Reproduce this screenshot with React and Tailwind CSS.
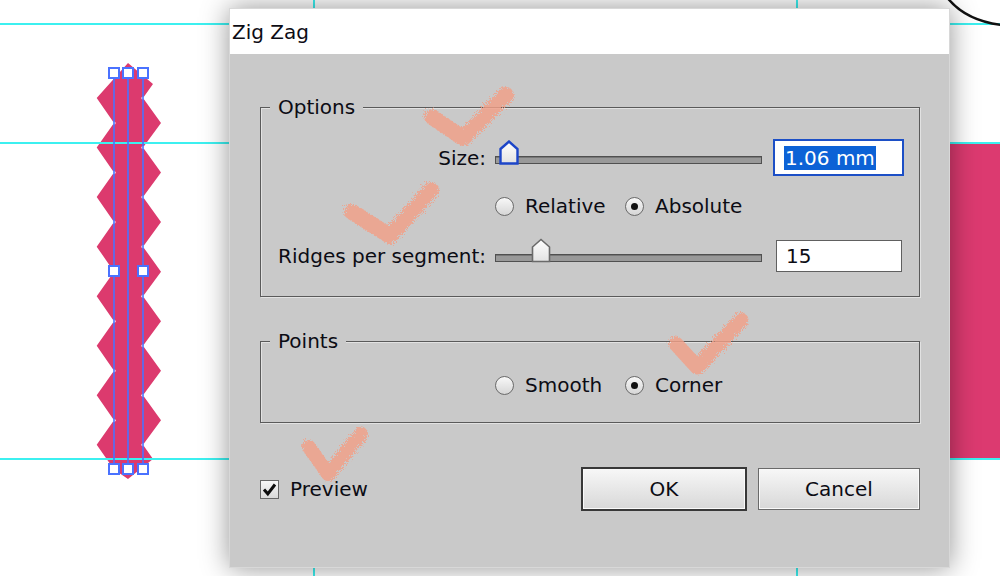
import React from 'react';

const P = 49.55;

// zig zag band, right edge top->bottom then left edge bottom->top
function zigzagPoints() {
  const pts = [[128, 63], [153, 84], [143, 98]];
  for (let k = 0; k < 7; k++) {
    pts.push([161, 123 + P * k]);
    pts.push([143, 98 + P * (k + 1)]);
  }
  pts.push([153, 459], [128, 479], [114, 469.5], [96.7, 98 + P * 7]);
  for (let k = 6; k >= 0; k--) {
    pts.push([114, 123 + P * k]);
    pts.push([96.7, 98 + P * k]);
  }
  return pts.map((p) => p.join(',')).join(' ');
}

function Canvas() {
  const handles = [
    [114, 73], [128, 73], [143, 73],
    [114, 271], [143, 271],
    [114, 469], [128, 469], [143, 469],
  ];
  return (
    <svg className="absolute inset-0" width="1000" height="576" viewBox="0 0 1000 576">
      <rect x="950" y="143" width="50" height="316" fill="#dc3a70" />
      <polygon points={zigzagPoints()} fill="#dc3a6e" />
      {[0, 1, 2, 3, 4, 5, 6, 7].map((k) => (
        <circle key={'a' + k} cx="143" cy={98 + P * k} r="1.6" fill="#fff" />
      ))}
      {[0, 1, 2, 3, 4, 5, 6].map((k) => (
        <circle key={'b' + k} cx="114" cy={123 + P * k} r="1.6" fill="#fff" />
      ))}
      {/* guides */}
      <g stroke="#3cf0f0" strokeWidth="2">
        <line x1="0" y1="24" x2="1000" y2="24" />
        <line x1="0" y1="143" x2="1000" y2="143" />
        <line x1="0" y1="459" x2="1000" y2="459" />
        <line x1="314" y1="0" x2="314" y2="576" />
        <line x1="797" y1="0" x2="797" y2="576" />
      </g>
      <path d="M946 -4 C958 12 976 22 1002 25" fill="none" stroke="#111" strokeWidth="2.5" />
      {/* selection */}
      <g stroke="#4a72ff" strokeWidth="1.6">
        <line x1="114" y1="73" x2="114" y2="469" />
        <line x1="128" y1="73" x2="128" y2="469" />
        <line x1="143" y1="73" x2="143" y2="469" />
      </g>
      {handles.map(([x, y], i) => (
        <rect key={i} x={x - 5} y={y - 5} width="10" height="10" fill="#fff" stroke="#4a72ff" strokeWidth="2" />
      ))}
    </svg>
  );
}

function Group({ title, className = '', children }) {
  return (
    <div className={`relative border border-[#5a5a5a] shadow-[inset_1px_1px_0_#e2e2e2,1px_1px_0_#e2e2e2] ${className}`}>
      <span className="absolute left-[9px] -top-[13px] bg-[#c9c9c9] px-[8px] leading-[24px]">{title}</span>
      {children}
    </div>
  );
}

function Thumb({ left, focused }) {
  const id = focused ? 'tf' : 'tn';
  return (
    <svg className="absolute top-[-7px]" style={{ left }} width="20" height="25" viewBox="0 0 20 25">
      <defs>
        <linearGradient id={id} x1="0" y1="0" x2="0" y2="1">
          <stop offset="0" stopColor="#ffffff" />
          <stop offset="1" stopColor="#e2e2e2" />
        </linearGradient>
      </defs>
      <polygon
        points="1.5,9 10,1.5 18.5,9 18.5,23.5 1.5,23.5"
        fill={`url(#${id})`}
        stroke={focused ? '#1c45c8' : '#6a6a6a'}
        strokeWidth={focused ? 2.4 : 1.6}
        strokeLinejoin="miter"
      />
    </svg>
  );
}

function Slider({ thumb, focused }) {
  return (
    <div className="relative w-[267px] h-[22px] flex items-center">
      <div className="w-full h-[8px] mt-[4px] border border-[#505050] bg-[#999] shadow-[inset_0_1px_0_#777]" />
      <Thumb left={thumb} focused={focused} />
    </div>
  );
}

function Radio({ checked, label, className = '' }) {
  return (
    <div className={`flex items-center ${className}`}>
      <span className="w-[19px] h-[19px] rounded-full border-[1.5px] border-[#6a6a6a] bg-linear-to-b from-[#f8f8f8] to-[#d6d6d6] flex items-center justify-center">
        {checked && <span className="w-[7px] h-[7px] rounded-full bg-[#111]" />}
      </span>
      <span className="ml-[11px]">{label}</span>
    </div>
  );
}

function Checks() {
  return (
    <svg className="absolute inset-0 pointer-events-none" width="1000" height="576" viewBox="0 0 1000 576">
      <defs>
        <filter id="brush" x="-20%" y="-20%" width="140%" height="140%">
          <feTurbulence type="fractalNoise" baseFrequency="1.1" numOctaves="2" result="n" />
          <feDisplacementMap in="SourceGraphic" in2="n" scale="9" result="d" />
          <feGaussianBlur in="d" stdDeviation="0.6" />
        </filter>
      </defs>
      <g fill="none" stroke="#f2a088" strokeLinecap="round" strokeLinejoin="round" opacity="0.82" filter="url(#brush)">
        <path d="M432 117 L463 138 L506 95" strokeWidth="16" />
        <path d="M352 212 L390 236 L431 190" strokeWidth="16" />
        <path d="M676 344 L697 367 L741 320" strokeWidth="15" />
        <path d="M309 447 L328 474 L361 434" strokeWidth="14" />
      </g>
    </svg>
  );
}

export default function App() {
  return (
    <div className="relative w-[1000px] h-[576px] bg-white overflow-hidden">
      <Canvas />

      {/* dialog */}
      <div className="absolute left-[229px] top-[8px] w-[721px] h-[560px] flex flex-col border border-[#d8d8d8] shadow-[0_0_26px_rgba(0,0,0,0.42)] font-['DejaVu_Sans',Verdana,sans-serif] text-[20px] text-[#0c0c14]">
        <div className="h-[45px] bg-white flex items-center pl-[2px]">Zig Zag</div>

        <div className="flex-1 bg-[#c9c9c9] pt-[53px] pl-[30px] pr-[29px]">
          <Group title="Options" className="h-[190px] pt-[32px]">
            <div className="flex items-center h-[35px]">
              <span className="w-[225px] text-right">Size:</span>
              <div className="ml-[9px]">
                <Slider thumb={4} focused />
              </div>
              <div className="ml-[11px] w-[131px] h-[37px] border-2 border-[#1c4fc6] bg-white flex items-center pl-[9px]">
                <span className="bg-[#0c62d6] text-white leading-[24px] px-[1px]">1.06 mm</span>
              </div>
            </div>
            <div className="flex items-center h-[24px] mt-[19px] pl-[234px]">
              <Radio label="Relative" className="w-[130px]" />
              <Radio label="Absolute" checked />
            </div>
            <div className="flex items-center h-[32px] mt-[22px]">
              <span className="w-[225px] text-right">Ridges per segment:</span>
              <div className="ml-[9px]">
                <Slider thumb={36} />
              </div>
              <div className="ml-[14px] w-[126px] h-[32px] border-[1.5px] border-[#606060] bg-white flex items-center pl-[9px]">
                15
              </div>
            </div>
          </Group>

          <Group title="Points" className="h-[82px] mt-[44px] pt-[31px]">
            <div className="flex items-center h-[24px] pl-[234px]">
              <Radio label="Smooth" className="w-[130px]" />
              <Radio label="Corner" checked />
            </div>
          </Group>

          <div className="flex items-center justify-between mt-[44px] h-[44px]">
            <div className="flex items-center">
              <span className="w-[19px] h-[19px] border border-[#666] bg-linear-to-b from-[#f6f6f6] to-[#d8d8d8] flex items-center justify-center">
                <svg width="15" height="15" viewBox="0 0 15 15">
                  <path d="M2 7.5 L5.8 11.8 L13 2.5" fill="none" stroke="#0c0c0c" strokeWidth="3" />
                </svg>
              </span>
              <span className="ml-[11px]">Preview</span>
            </div>
            <div className="flex items-center">
              <button className="w-[166px] h-[44px] border-2 border-[#383838] shadow-[inset_0_0_0_1px_#fafafa] bg-linear-to-b from-[#f7f7f7] to-[#d8d8d8] flex items-center justify-center">
                OK
              </button>
              <button className="ml-[11px] w-[162px] h-[42px] border border-[#6a6a6a] shadow-[inset_0_0_0_1px_#fafafa] bg-linear-to-b from-[#f7f7f7] to-[#d8d8d8] flex items-center justify-center">
                Cancel
              </button>
            </div>
          </div>
        </div>
      </div>

      <Checks />
    </div>
  );
}
